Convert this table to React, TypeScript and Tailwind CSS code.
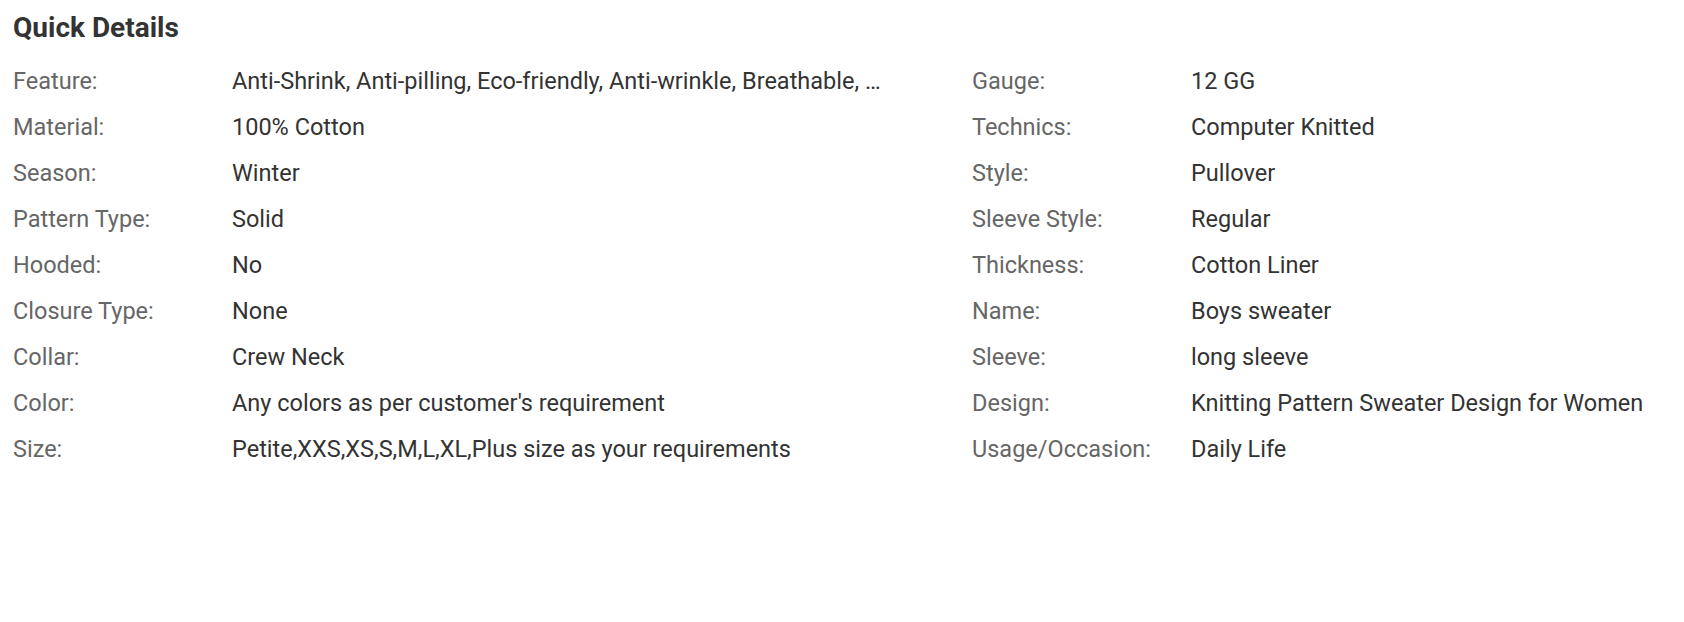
const left: [string, string][] = [
  ["Feature:", "Anti-Shrink, Anti-pilling, Eco-friendly, Anti-wrinkle, Breathable, Quick Dry, Plus Size, Sustainable"],
  ["Material:", "100% Cotton"],
  ["Season:", "Winter"],
  ["Pattern Type:", "Solid"],
  ["Hooded:", "No"],
  ["Closure Type:", "None"],
  ["Collar:", "Crew Neck"],
  ["Color:", "Any colors as per customer's requirement"],
  ["Size:", "Petite,XXS,XS,S,M,L,XL,Plus size as your requirements"],
];

const right: [string, string][] = [
  ["Gauge:", "12 GG"],
  ["Technics:", "Computer Knitted"],
  ["Style:", "Pullover"],
  ["Sleeve Style:", "Regular"],
  ["Thickness:", "Cotton Liner"],
  ["Name:", "Boys sweater"],
  ["Sleeve:", "long sleeve"],
  ["Design:", "Knitting Pattern Sweater Design for Women"],
  ["Usage/Occasion:", "Daily Life"],
];

function Row({ label, value, valueWidth }: { label: string; value: string; valueWidth: string }) {
  return (
    <div className="flex h-[46px] items-center">
      <div className="w-[219px] shrink-0 text-[#666666]">{label}</div>
      <div className={`${valueWidth} truncate text-[#333333]`}>{value}</div>
    </div>
  );
}

export default function App() {
  return (
    <div className="min-h-[622px] w-full bg-white px-[13px] pt-[10px] font-['Roboto',sans-serif]">
      <h2 className="text-[28px] leading-[36px] font-bold text-[#333333]">Quick Details</h2>
      <div className="mt-[13px] flex text-[23.5px]">
        <div className="w-[959px] shrink-0">
          {left.map(([l, v]) => (
            <Row key={l} label={l} value={v} valueWidth="w-[650px]" />
          ))}
        </div>
        <div className="flex-1">
          {right.map(([l, v]) => (
            <Row key={l} label={l} value={v} valueWidth="w-[480px]" />
          ))}
        </div>
      </div>
    </div>
  );
}
